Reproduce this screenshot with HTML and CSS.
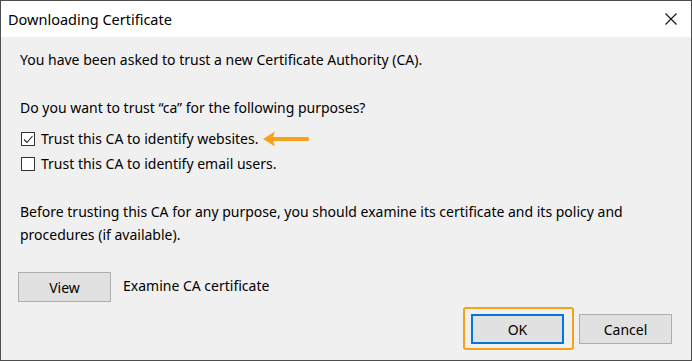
FILE: index.html
```html
<!DOCTYPE html>
<html lang="en">
<head>
<meta charset="utf-8">
<title>Downloading Certificate</title>
<link rel="stylesheet" href="styles.css">
</head>
<body>
<div class="window">
  <div class="titlebar">
    <span class="title">Downloading Certificate</span>
    <svg class="close" width="12" height="12" viewBox="0 0 12 12"><path d="M0.5 0.5 L11.5 11.5 M11.5 0.5 L0.5 11.5" stroke="#111" stroke-width="1.1" fill="none"/></svg>
  </div>
  <div class="content">
    <p class="line first">You have been asked to trust a new Certificate Authority (CA).</p>
    <p class="line ask">Do you want to trust “ca” for the following purposes?</p>
    <div class="checks">
      <label class="check">
        <svg class="box" width="14" height="14" viewBox="0 0 14 14"><rect x="0.5" y="0.5" width="13" height="13" fill="#fff" stroke="#333"/><path d="M3 7.5 L6 10.5 L11.5 4" stroke="#222" stroke-width="1.1" fill="none"/></svg>
        <span>Trust this CA to identify websites.</span>
        <svg class="arrow" width="46" height="16" viewBox="0 0 46 16"><path d="M0 8 L12 0.5 L10 6 L45 6 Q46 6 46 8 Q46 10 45 10 L10 10 L12 15.5 Z" fill="#f7a11b"/></svg>
      </label>
      <label class="check">
        <svg class="box" width="14" height="14" viewBox="0 0 14 14"><rect x="0.5" y="0.5" width="13" height="13" fill="#fff" stroke="#333"/></svg>
        <span>Trust this CA to identify email users.</span>
      </label>
    </div>
    <p class="line before">Before trusting this CA for any purpose, you should examine its certificate and its policy and procedures (if available).</p>
    <div class="view-row">
      <button class="btn">View</button>
      <span class="view-label">Examine CA certificate</span>
    </div>
  </div>
  <div class="footer">
    <button class="btn default">OK</button>
    <button class="btn">Cancel</button>
  </div>
</div>
</body>
</html>
```

FILE: styles.css
```css
* { box-sizing: border-box; }
html, body { margin: 0; padding: 0; }
body {
  font-family: "Noto Sans", "Open Sans", sans-serif;
  font-size: 14px;
  color: #000;
  background: #fff;
}
.window {
  width: 692px;
  height: 361px;
  border: 1px solid #4d4d4d;
  background: #f0f0f0;
  display: flex;
  flex-direction: column;
}
.titlebar {
  height: 36px;
  background: #fff;
  display: flex;
  align-items: center;
  justify-content: space-between;
  padding: 0 14px 0 7px;
  flex: none;
}
.title { font-size: 14.5px; }
.close { display: block; }
.content {
  padding: 0 19px;
  flex: 1;
}
.line {
  margin: 0;
  line-height: 23px;
}
.first { margin-top: 11px; }
.ask { margin-top: 25px; }
.checks {
  margin-top: 7px;
  display: flex;
  flex-direction: column;
}
.check {
  height: 25px;
  display: flex;
  align-items: center;
  gap: 6px;
  padding-left: 1px;
}
.box { display: block; flex: none; }
.arrow { display: block; margin-left: -1px; }
.before { margin-top: 24px; width: 650px; }
.view-row {
  margin-top: 26px;
  margin-left: -2px;
  display: flex;
  align-items: center;
  gap: 12px;
}
.view-label { position: relative; top: -2px; }
.btn {
  width: 93px;
  height: 30px;
  background: #e1e1e1;
  border: 1px solid #adadad;
  border-radius: 0;
  font-family: inherit;
  font-size: 14px;
  color: #000;
  padding: 0;
  margin: 0;
}
.footer {
  flex: none;
  display: flex;
  justify-content: flex-end;
  gap: 15px;
  padding: 0 19px 16px 0;
}
.btn.default {
  border: 2px solid #0078d7;
  position: relative;
}
.btn.default::after {
  content: "";
  position: absolute;
  top: -9px;
  bottom: -8px;
  left: -10px;
  right: -12px;
  border: 2px solid #f7a11b;
  border-radius: 3px;
}
```
